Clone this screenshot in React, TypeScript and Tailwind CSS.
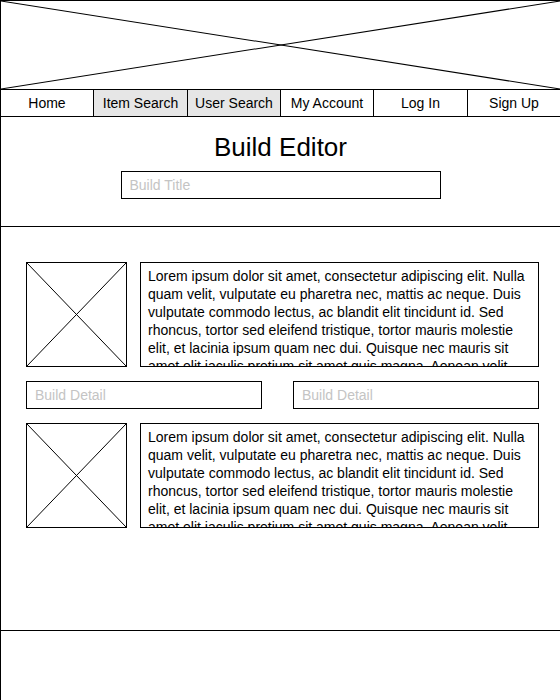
import React from "react";

const LOREM =
  "Lorem ipsum dolor sit amet, consectetur adipiscing elit. Nulla quam velit, vulputate eu pharetra nec, mattis ac neque. Duis vulputate commodo lectus, ac blandit elit tincidunt id. Sed rhoncus, tortor sed eleifend tristique, tortor mauris molestie elit, et lacinia ipsum quam nec dui. Quisque nec mauris sit amet elit iaculis pretium sit amet quis magna. Aenean velit odio, elementum in tempus ut, vehicula eu diam.";

function XBox({ className }: { className: string }) {
  return (
    <div className={className}>
      <svg className="block w-full h-full" viewBox="0 0 100 100" preserveAspectRatio="none">
        <line x1="0" y1="0" x2="100" y2="100" stroke="#000" strokeWidth="1" vectorEffect="non-scaling-stroke" />
        <line x1="100" y1="0" x2="0" y2="100" stroke="#000" strokeWidth="1" vectorEffect="non-scaling-stroke" />
      </svg>
    </div>
  );
}

function Row() {
  return (
    <div className="flex gap-[13px]">
      <XBox className="w-[101px] h-[105px] border border-black shrink-0" />
      <div className="w-[399px] h-[105px] border border-black overflow-hidden pt-[4px] pl-[7px] pr-[2px] text-[14px] leading-[18px] text-black">
        {LOREM}
      </div>
    </div>
  );
}

const navItems = [
  { label: "Home", gray: false },
  { label: "Item Search", gray: true },
  { label: "User Search", gray: true },
  { label: "My Account", gray: false },
  { label: "Log In", gray: false },
  { label: "Sign Up", gray: false },
];

export default function App() {
  return (
    <div
      className="w-[560px] h-[700px] border-l border-t border-black bg-white overflow-hidden flex flex-col"
      style={{ fontFamily: '"Liberation Sans", Arial, sans-serif' }}
    >
      <XBox className="h-[89px] border-b border-black shrink-0" />
      <nav className="grid grid-cols-[93px_94px_93px_93px_94px_1fr] h-[27px] border-b border-black shrink-0 text-[14px] text-black">
        {navItems.map((n, i) => (
          <div
            key={n.label}
            className={
              "flex items-center justify-center " +
              (i < 5 ? "border-r border-black " : "") +
              (n.gray ? "bg-[#e6e6e6]" : "bg-white")
            }
          >
            {n.label}
          </div>
        ))}
      </nav>
      <section className="h-[110px] border-b border-black shrink-0 pt-[15px] flex flex-col items-center">
        <h1 className="text-[26px] leading-[30px] text-black">Build Editor</h1>
        <input
          className="mt-[9px] w-[320px] h-[28px] border border-black px-[8px] text-[14px] placeholder:text-[#c4c4c4] outline-none"
          placeholder="Build Title"
        />
      </section>
      <section className="h-[404px] border-b border-black shrink-0 pt-[35px] pl-[25px] flex flex-col gap-[14px]">
        <Row />
        <div className="flex">
          <input
            className="w-[236px] h-[28px] border border-black px-[8px] text-[14px] placeholder:text-[#c4c4c4] outline-none"
            placeholder="Build Detail"
          />
          <input
            className="ml-[31px] w-[246px] h-[28px] border border-black px-[8px] text-[14px] placeholder:text-[#c4c4c4] outline-none"
            placeholder="Build Detail"
          />
        </div>
        <Row />
      </section>
      <footer className="flex-1" />
    </div>
  );
}
